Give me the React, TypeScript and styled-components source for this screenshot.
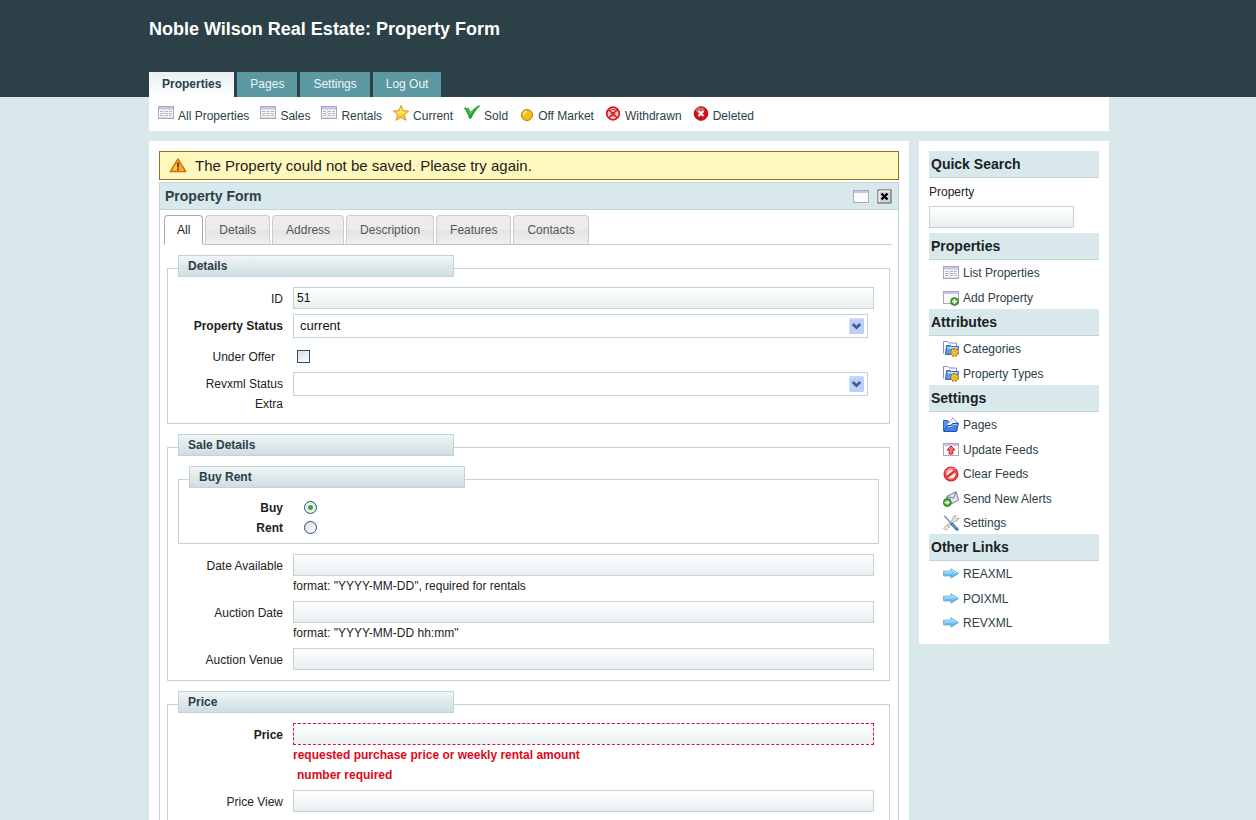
import React, { useState } from "react";
import styled, { createGlobalStyle, css } from "styled-components";

const colors = {
  dark: "#2b4147",
  teal: "#5b98a1",
  pale: "#d8e8eb",
  line: "#c3d3d6",
  text: "#222",
  link: "#2b4147",
  error: "#e0081a",
};

const GlobalStyle = createGlobalStyle`
  * { box-sizing: border-box; }
  body {
    margin: 0;
    background: ${colors.pale};
    color: ${colors.text};
    font: 12px/20px "Liberation Sans", Arial, sans-serif;
  }
  h1, h2, h3, ul, p { margin: 0; padding: 0; }
  ul { list-style: none; }
  a { color: inherit; text-decoration: none; }
  button, input, select { font: inherit; color: inherit; margin: 0; }
`;

/* ---------- page frame ---------- */

const Container = styled.div`
  max-width: 962px;
  margin: 0 auto;
  padding-left: 2px;
`;

const Header = styled.header`
  background: ${colors.dark};
`;

const HeaderInner = styled(Container)`
  display: flex;
  flex-direction: column;
  justify-content: space-between;
  min-height: 97px;
  padding-top: 16px;
`;

const SiteTitle = styled.h1`
  font-size: 18px;
  line-height: 26px;
  color: #fff;
`;

const MainNav = styled.nav`
  display: flex;
  gap: 3px;
`;

const NavTab = styled.a<{ $active?: boolean }>`
  padding: 0 13px;
  line-height: 25px;
  background: ${colors.teal};
  color: #eef6f7;
  ${(p) =>
    p.$active &&
    css`
      background: linear-gradient(#e9eff3, #fff);
      color: ${colors.dark};
      font-weight: bold;
    `}
`;

const SubNav = styled.nav`
  display: flex;
  flex-wrap: wrap;
  gap: 11px;
  padding: 8px 9px 6px;
  background: #fff;
`;

const IconLink = styled.a`
  display: flex;
  align-items: center;
  gap: 4px;
  color: ${colors.link};
  svg {
    flex: none;
  }
`;

const SubNavLink = styled(IconLink)`
  align-items: flex-start;
  span {
    padding-top: 2px;
    line-height: 18px;
  }
`;

const Columns = styled.div`
  display: flex;
  align-items: flex-start;
  gap: 10px;
  margin-top: 10px;
`;

const Main = styled.main`
  flex: 1;
  min-width: 0;
  padding: 10px;
  background: #fff;
`;

const Sidebar = styled.aside`
  flex: none;
  width: 190px;
  padding: 10px;
  background: #fff;
`;

/* ---------- main column ---------- */

const Alert = styled.p`
  display: flex;
  align-items: center;
  gap: 8px;
  height: 29px;
  padding: 0 9px;
  margin-bottom: 2px;
  border: 1px solid #94711f;
  background: #fff8bd;
  font-size: 15px;
  color: #222;
`;

const Panel = styled.section`
  border: 1px solid ${colors.line};
`;

const PanelHeader = styled.div`
  display: flex;
  align-items: center;
  gap: 8px;
  height: 27px;
  padding: 0 6px 0 5px;
  border-bottom: 1px solid ${colors.line};
  background: ${colors.pale};
`;

const PanelTitle = styled.h2`
  flex: 1;
  font-size: 14px;
  color: ${colors.dark};
`;

const PanelButton = styled.button`
  display: flex;
  padding: 0;
  border: 0;
  background: none;
`;

const TabList = styled.div`
  display: flex;
  gap: 2px;
  margin: 5px 6px 0 4px;
  border-bottom: 1px solid #ccc;
`;

const Tab = styled.button<{ $active: boolean }>`
  height: 30px;
  margin-bottom: -1px;
  padding: 0 13px;
  border: 1px solid #ccc;
  border-radius: 4px 4px 0 0;
  border-bottom-color: #c4c4c4;
  background: linear-gradient(#ececec 0 50%, #e4e4e4 50%, #efefef);
  color: #555;
  ${(p) =>
    p.$active &&
    css`
      padding: 0 12px;
      border-color: #aaa;
      border-bottom-color: #fff;
      background: #fff;
      color: #222;
    `}
`;

const Form = styled.form`
  display: flex;
  flex-direction: column;
  gap: 10px;
  padding: 10px 8px 10px 7px;
`;

const FieldsetBox = styled.fieldset`
  min-width: 0;
  margin: 0;
  padding: 0;
  border: 0;
`;

const Legend = styled.legend`
  position: relative;
  width: 276px;
  height: 22px;
  margin-left: 11px;
  padding: 0 9px;
  border: 1px solid ${colors.line};
  background: linear-gradient(#eff5f7, #cfdde1);
  font-weight: bold;
  color: ${colors.dark};
`;

const FieldsetBody = styled.div<{ $gap: number; $bottom: number }>`
  display: flex;
  flex-direction: column;
  gap: ${(p) => p.$gap}px;
  margin-top: -9px;
  padding: 18px 10px ${(p) => p.$bottom}px;
  border: 1px solid ${colors.line};
`;

const NestedGroup = styled.div`
  padding-bottom: 5px;
`;

const Row = styled.div`
  display: flex;
  gap: 10px;
`;

const Label = styled.label<{ $bold?: boolean }>`
  flex: none;
  width: 105px;
  padding-top: 2px;
  text-align: right;
  font-weight: ${(p) => (p.$bold ? "bold" : "normal")};
`;

const Control = styled.div`
  flex: 1;
  min-width: 0;
  padding-right: 5px;
`;

const TextInput = styled.input<{ $error?: boolean }>`
  display: block;
  width: 100%;
  height: 22px;
  padding: 0 3px;
  border: 1px solid ${colors.line};
  border-radius: 0;
  background: linear-gradient(#fff, #e8eff1);
  color: #111;
  outline: 0;
  ${(p) => p.$error && css`border: 1px dashed #e0103a;`}
`;

const SelectWrap = styled.div`
  position: relative;
  margin-right: 6px;
  svg {
    position: absolute;
    top: 4px;
    right: 4px;
    pointer-events: none;
  }
`;

const SelectBox = styled.select`
  display: block;
  appearance: none;
  width: 100%;
  height: 24px;
  padding: 0 24px 0 6px;
  border: 1px solid ${colors.line};
  border-radius: 0;
  background: #fff;
  font-size: 13px;
  color: #111;
`;

const Hint = styled.p`
  color: #222;
`;

const ErrorText = styled.p<{ $indent?: boolean }>`
  padding-left: ${(p) => (p.$indent ? 4 : 0)}px;
  font-weight: bold;
  color: ${colors.error};
`;

const CheckRow = styled(Row)`
  height: 24px;
  padding-top: 4px;
`;

const CheckLabel = styled(Label)`
  padding: 0 8px 0 0;
`;

const Checkbox = styled.input`
  appearance: none;
  width: 13px;
  height: 13px;
  margin: 3px 4px;
  border: 1px solid #1c5180;
  background: linear-gradient(135deg, #dcdcd7, #fff);
  &:checked {
    background: #21a121;
  }
`;

const RadioLabel = styled(Label)`
  width: 94px;
  padding-top: 0;
`;

const Radio = styled.input`
  appearance: none;
  width: 13px;
  height: 13px;
  margin: 3px 11px;
  border: 1px solid #1c5180;
  border-radius: 50%;
  background: linear-gradient(135deg, #dcdcd7, #fff);
  &:checked {
    background: radial-gradient(circle, #3da83a 0 2px, #eef2ee 3px);
  }
`;

/* ---------- sidebar ---------- */

const SideHeading = styled.h3`
  height: 27px;
  padding-left: 2px;
  border-bottom: 1px solid ${colors.line};
  background: ${colors.pale};
  font-size: 14px;
  line-height: 26px;
  color: #1a2224;
`;

const SideList = styled.ul`
  padding-left: 14px;
`;

const SideItem = styled.li`
  height: 24px;
  padding-top: 3px;
  &:nth-child(even) {
    height: 25px;
    padding-top: 4px;
  }
`;

const Search = styled.form`
  padding: 4px 0 5px;
  label {
    display: block;
    margin-bottom: 4px;
  }
`;

const SearchInput = styled(TextInput)`
  width: 145px;
`;

/* ---------- icons ---------- */

const Icon = ({ children }: { children: React.ReactNode }) => (
  <svg width="16" height="16" viewBox="0 0 16 16" aria-hidden="true">
    {children}
  </svg>
);

const WindowShape = () => (
  <>
    <rect x="0.5" y="1.5" width="15" height="12" fill="#fbfbfd" stroke="#aaa9b8" />
    <rect x="1" y="2" width="14" height="2" fill="#c9c5e6" />
    <path d="M0.5 1.500h15" stroke="#a9a5cc" />
  </>
);

const TableIcon = () => (
  <Icon>
    <WindowShape />
    <rect x="1" y="4" width="14" height="1" fill="#dddbe8" />
    <path d="M2 6.500h3M7 6.500h3M11 6.500h3M2 8.500h3M7 8.500h3M11 8.500h3M2 10.500h3M7 10.500h3M11 10.500h3" stroke="#b3b3bd" />
    <path d="M6 5v8" stroke="#d5d5dd" />
    <path d="M1 12.500h14" stroke="#dcdce4" />
  </Icon>
);

const WindowIcon = () => (
  <Icon>
    <g transform="translate(0 1)">
      <WindowShape />
    </g>
  </Icon>
);

const AddWindowIcon = () => (
  <Icon>
    <WindowShape />
    <circle cx="11.500" cy="11.500" r="3.900" fill="#4aa436" stroke="#2b7a1e" strokeWidth="0.800" />
    <path d="M11.500 9v5M9 11.500h5" stroke="#fff" strokeWidth="1.500" />
  </Icon>
);

const UploadIcon = () => (
  <Icon>
    <WindowShape />
    <path d="M8 4l4 4H9.800v4H6.200V8H4z" fill="#f0766c" stroke="#c02222" strokeWidth="1" />
  </Icon>
);

const StarIcon = () => (
  <Icon>
    <path
      d="M8 0.600l2.200 5 5.400 0.500-4.100 3.600 1.300 5.600L8 12.400l-4.800 2.900 1.300-5.600L0.400 6.100l5.400-0.500z"
      fill="#ffd01f"
      stroke="#df8f3c"
      strokeLinejoin="round"
    />
    <path d="M8 3l1.300 3.500 3.700 0.300-3 2.200H5L3 6.800l3.700-0.300z" fill="#fff09a" opacity="0.700" />
  </Icon>
);

const CheckIcon = () => (
  <Icon>
    <path d="M0.500 3L4.600 3.600l1.900 4C8.800 4.600 11.500 2 15.700 0.700 12 4.300 9 8.500 6.800 13.400H5.600C4.500 9.800 3 6 0.500 3z" fill="#1fae2c" stroke="#138a22" strokeWidth="0.900" strokeLinejoin="round" />
    <path d="M2 3.900l2.200 0.400L6.300 9C8.200 6 10.200 3.800 12.800 2.300" fill="none" stroke="#6fd96d" strokeWidth="0.900" />
  </Icon>
);

const CoinIcon = () => (
  <svg width="15" height="16" viewBox="0 0 15 16" aria-hidden="true">
    <circle cx="8" cy="10" r="5.500" fill="#f6bf12" stroke="#a87a10" />
    <path d="M4.500 10A3.500 3.500 0 0 1 8 6.500" fill="none" stroke="#ffe98a" strokeWidth="1.800" />
  </svg>
);

const WithdrawnIcon = () => (
  <Icon>
    <circle cx="8" cy="8.500" r="6.300" fill="#f7c9c9" stroke="#cf2029" strokeWidth="1.800" />
    <path d="M3.500 4.500l9 8.500M12.500 4.500l-9 8.500" stroke="#cf2029" strokeWidth="1.400" />
    <path d="M4 6.500c2-2.600 6-2.600 8 0M5 12c2-1.800 4-1.800 6 0M5.500 8.500c1.500-1.500 3.500-1.500 5 0" fill="none" stroke="#cf2029" />
  </Icon>
);

const DeletedIcon = () => (
  <Icon>
    <circle cx="8" cy="8.500" r="6.800" fill="#d5121a" stroke="#b00c14" />
    <ellipse cx="7" cy="5" rx="4.500" ry="2.800" fill="#f38a86" opacity="0.600" />
    <path d="M5.500 6l5 5M10.500 6l-5 5" stroke="#fff" strokeWidth="2" />
  </Icon>
);

const WarningIcon = () => (
  <svg width="18" height="16" viewBox="0 0 18 16" aria-hidden="true">
    <path d="M9 0.800L16.800 13.600H1.200z" fill="#ffa51c" stroke="#c36a0c" strokeWidth="1.200" strokeLinejoin="round" />
    <path d="M9 3.200L4 11.800h5z" fill="#ffc847" />
    <path d="M9 4.500v5M9 10.500v1.700" stroke="#6b3a10" strokeWidth="1.800" />
  </svg>
);

const CloseIcon = () => (
  <svg width="15" height="16" viewBox="0 0 15 16" aria-hidden="true">
    <rect x="1" y="2" width="13" height="13" fill="#d4d4d4" stroke="#555" />
    <path d="M2 14V3h11" fill="none" stroke="#fff" />
    <path d="M4.500 5.500l6 6M10.500 5.500l-6 6" stroke="#000" strokeWidth="2.400" />
  </svg>
);

const FolderGearIcon = () => (
  <Icon>
    <path d="M0.500 12.500v-12h4l1.500 1.500h7.500v3" fill="#fff" stroke="#7d90c9" />
    <path d="M2.500 13.500L3.500 4.500h4l1 1h7l-1 8z" fill="#5f97ee" stroke="#3563bd" />
    <path d="M4.500 6.800h10" stroke="#c6dcff" strokeWidth="1.600" />
    <circle cx="11.500" cy="11.500" r="3.600" fill="#f6bd1c" stroke="#a9720d" strokeDasharray="2 1" strokeWidth="1.600" />
    <circle cx="11.500" cy="11.500" r="3" fill="#f9c92b" />
    <circle cx="11.500" cy="11.500" r="1.200" fill="#fff3c0" stroke="#a9720d" strokeWidth="0.700" />
  </Icon>
);

const OpenFolderIcon = () => (
  <Icon>
    <path d="M0.500 14V3.500h4L6 5h8v9z" fill="#5c93ea" stroke="#2f5fc0" />
    <path d="M4 7.500l6-6.500L13.500 5v4H4z" fill="#f6f3fb" stroke="#a9a3cf" />
    <path d="M1 14.500L4 8.500h4l1.500-2h6L13 14.500z" fill="#3f86ec" stroke="#1f4fae" />
    <path d="M4.600 9.500h4l1.500-2h4.300" fill="none" stroke="#a9d0ff" />
  </Icon>
);

const ForbiddenIcon = () => (
  <Icon>
    <circle cx="8" cy="8" r="7.500" fill="#c9202a" />
    <circle cx="8" cy="8" r="6.500" fill="#ef5350" />
    <circle cx="8" cy="8" r="4.500" fill="#fde9e6" />
    <path d="M4 11L12 5" stroke="#e0353a" strokeWidth="2.600" />
    <path d="M2.500 6C4 2.500 9 1 12 3" fill="none" stroke="#f9a3a0" />
  </Icon>
);

const MailIcon = () => (
  <Icon>
    <path d="M3.500 5.500L13.200 0.700l2.300 8.500L7 13.500z" fill="#e3e3f1" stroke="#77779a" />
    <path d="M3.800 5.800L10.500 7 13 1.200" fill="none" stroke="#77779a" />
    <circle cx="4.300" cy="11.500" r="3.900" fill="#43b03c" stroke="#1e741e" />
    <path d="M1.800 10.600h2.500V9L7 11.500 4.300 14v-1.600H1.800z" fill="#e9ffe6" />
  </Icon>
);

const ToolsIcon = () => (
  <Icon>
    <path d="M12 4L4 12" stroke="#9aa3ad" strokeWidth="3" />
    <path d="M12 4L4 12" stroke="#eceff3" strokeWidth="1.400" />
    <path d="M10 4.500c-0.600-2.500 1-4.200 3.200-4L12 2.500l1.500 1.500 2-1.200c0.300 2.200-1.600 3.800-4 3.200" fill="#e6e9ec" stroke="#a39a90" strokeWidth="0.800" />
    <path d="M0.600 13L4.200 10l1.900 1.800-3.400 3.600z" fill="#eef0f3" stroke="#a39a90" strokeWidth="0.800" />
    <path d="M1.200 0.800L8 8" stroke="#8b96a3" strokeWidth="1.600" />
    <path d="M9 9l5 5.200" stroke="#2f6fae" strokeWidth="3" strokeLinecap="round" />
    <path d="M9.200 9l4.300 4.500" stroke="#8fc0ea" />
  </Icon>
);

const ArrowIcon = () => (
  <Icon>
    <path d="M0.600 5.200h7.400V2.900L15.500 7.500 8 12.100V9.900H0.600z" fill="#7acbf5" stroke="#6aa9d2" strokeLinejoin="round" />
    <path d="M1.500 6.200H9V4.500L13.500 7.300" fill="none" stroke="#b9e6fd" />
    <path d="M1.500 9H8.500v1.500l4.500-2.600" fill="none" stroke="#4fb3ea" />
  </Icon>
);

const SelectArrow = () => (
  <svg width="15" height="16" viewBox="0 0 15 16" aria-hidden="true">
    <rect width="15" height="16" rx="1.500" fill="#bccffa" />
    <path d="M0.500 15V1h13.500" fill="none" stroke="#d5e0fd" />
    <path d="M3.800 6l3.700 3.700L11.200 6" fill="none" stroke="#43598a" strokeWidth="2.600" />
  </svg>
);

/* ---------- data ---------- */

type LinkItem = { label: string; icon: () => React.JSX.Element };

const navItems = ["Properties", "Pages", "Settings", "Log Out"];

const filters: LinkItem[] = [
  { label: "All Properties", icon: TableIcon },
  { label: "Sales", icon: TableIcon },
  { label: "Rentals", icon: TableIcon },
  { label: "Current", icon: StarIcon },
  { label: "Sold", icon: CheckIcon },
  { label: "Off Market", icon: CoinIcon },
  { label: "Withdrawn", icon: WithdrawnIcon },
  { label: "Deleted", icon: DeletedIcon },
];

const formTabs = ["All", "Details", "Address", "Description", "Features", "Contacts"];

const sideSections: { title: string; items: LinkItem[] }[] = [
  {
    title: "Properties",
    items: [
      { label: "List Properties", icon: TableIcon },
      { label: "Add Property", icon: AddWindowIcon },
    ],
  },
  {
    title: "Attributes",
    items: [
      { label: "Categories", icon: FolderGearIcon },
      { label: "Property Types", icon: FolderGearIcon },
    ],
  },
  {
    title: "Settings",
    items: [
      { label: "Pages", icon: OpenFolderIcon },
      { label: "Update Feeds", icon: UploadIcon },
      { label: "Clear Feeds", icon: ForbiddenIcon },
      { label: "Send New Alerts", icon: MailIcon },
      { label: "Settings", icon: ToolsIcon },
    ],
  },
  {
    title: "Other Links",
    items: [
      { label: "REAXML", icon: ArrowIcon },
      { label: "POIXML", icon: ArrowIcon },
      { label: "REVXML", icon: ArrowIcon },
    ],
  },
];

/* ---------- form pieces ---------- */

type GroupProps = { title: string; gap?: number; bottom?: number; children: React.ReactNode };

const Group = ({ title, gap = 5, bottom = 10, children }: GroupProps) => (
  <FieldsetBox>
    <Legend>{title}</Legend>
    <FieldsetBody $gap={gap} $bottom={bottom}>
      {children}
    </FieldsetBody>
  </FieldsetBox>
);

type FieldProps = {
  id: string;
  label: string;
  bold?: boolean;
  error?: boolean;
  value?: string;
  children?: React.ReactNode;
};

const TextField = ({ id, label, bold, error, value = "", children }: FieldProps) => (
  <Row>
    <Label htmlFor={id} $bold={bold}>
      {label}
    </Label>
    <Control>
      <TextInput id={id} type="text" defaultValue={value} $error={error} />
      {children}
    </Control>
  </Row>
);

const SelectField = ({ id, label, bold, options }: FieldProps & { options: string[] }) => (
  <Row>
    <Label htmlFor={id} $bold={bold}>
      {label}
    </Label>
    <Control>
      <SelectWrap>
        <SelectBox id={id}>
          {options.map((option) => (
            <option key={option}>{option}</option>
          ))}
        </SelectBox>
        <SelectArrow />
      </SelectWrap>
    </Control>
  </Row>
);

export default function App() {
  const [tab, setTab] = useState("All");

  return (
    <>
      <GlobalStyle />
      <Header>
        <HeaderInner>
          <SiteTitle>Noble Wilson Real Estate: Property Form</SiteTitle>
          <MainNav>
            {navItems.map((item, i) => (
              <NavTab key={item} href="#" $active={i === 0}>
                {item}
              </NavTab>
            ))}
          </MainNav>
        </HeaderInner>
      </Header>
      <Container>
        <SubNav>
          {filters.map(({ label, icon: Glyph }) => (
            <SubNavLink key={label} href="#">
              <Glyph />
              <span>{label}</span>
            </SubNavLink>
          ))}
        </SubNav>
        <Columns>
          <Main>
            <Alert role="alert">
              <WarningIcon />
              The Property could not be saved. Please try again.
            </Alert>
            <Panel>
              <PanelHeader>
                <PanelTitle>Property Form</PanelTitle>
                <PanelButton type="button" aria-label="Window">
                  <WindowIcon />
                </PanelButton>
                <PanelButton type="button" aria-label="Close">
                  <CloseIcon />
                </PanelButton>
              </PanelHeader>
              <TabList role="tablist">
                {formTabs.map((name) => (
                  <Tab
                    key={name}
                    type="button"
                    role="tab"
                    aria-selected={tab === name}
                    $active={tab === name}
                    onClick={() => setTab(name)}
                  >
                    {name}
                  </Tab>
                ))}
              </TabList>
              <Form>
                <Group title="Details" bottom={9}>
                  <TextField id="id" label="ID" value="51" />
                  <SelectField id="status" label="Property Status" bold options={["current"]} />
                  <CheckRow>
                    <CheckLabel htmlFor="offer">Under Offer</CheckLabel>
                    <Checkbox id="offer" type="checkbox" />
                  </CheckRow>
                  <SelectField id="revxml" label="Revxml Status Extra" options={[""]} />
                </Group>
                <Group title="Sale Details">
                  <NestedGroup>
                    <Group title="Buy Rent" gap={0} bottom={5}>
                      <Row>
                        <RadioLabel htmlFor="buy" $bold>
                          Buy
                        </RadioLabel>
                        <Radio id="buy" type="radio" name="buy_rent" defaultChecked />
                      </Row>
                      <Row>
                        <RadioLabel htmlFor="rent" $bold>
                          Rent
                        </RadioLabel>
                        <Radio id="rent" type="radio" name="buy_rent" />
                      </Row>
                    </Group>
                  </NestedGroup>
                  <TextField id="available" label="Date Available">
                    <Hint>format: "YYYY-MM-DD", required for rentals</Hint>
                  </TextField>
                  <TextField id="auction" label="Auction Date">
                    <Hint>format: "YYYY-MM-DD hh:mm"</Hint>
                  </TextField>
                  <TextField id="venue" label="Auction Venue" />
                </Group>
                <Group title="Price">
                  <TextField id="price" label="Price" bold error>
                    <ErrorText>requested purchase price or weekly rental amount</ErrorText>
                    <ErrorText $indent>number required</ErrorText>
                  </TextField>
                  <TextField id="price-view" label="Price View" />
                </Group>
              </Form>
            </Panel>
          </Main>
          <Sidebar>
            <SideHeading>Quick Search</SideHeading>
            <Search>
              <label htmlFor="search">Property</label>
              <SearchInput id="search" type="text" />
            </Search>
            {sideSections.map((section) => (
              <section key={section.title}>
                <SideHeading>{section.title}</SideHeading>
                <SideList>
                  {section.items.map(({ label, icon: Glyph }) => (
                    <SideItem key={label}>
                      <IconLink href="#">
                        <Glyph />
                        {label}
                      </IconLink>
                    </SideItem>
                  ))}
                </SideList>
              </section>
            ))}
          </Sidebar>
        </Columns>
      </Container>
    </>
  );
}
